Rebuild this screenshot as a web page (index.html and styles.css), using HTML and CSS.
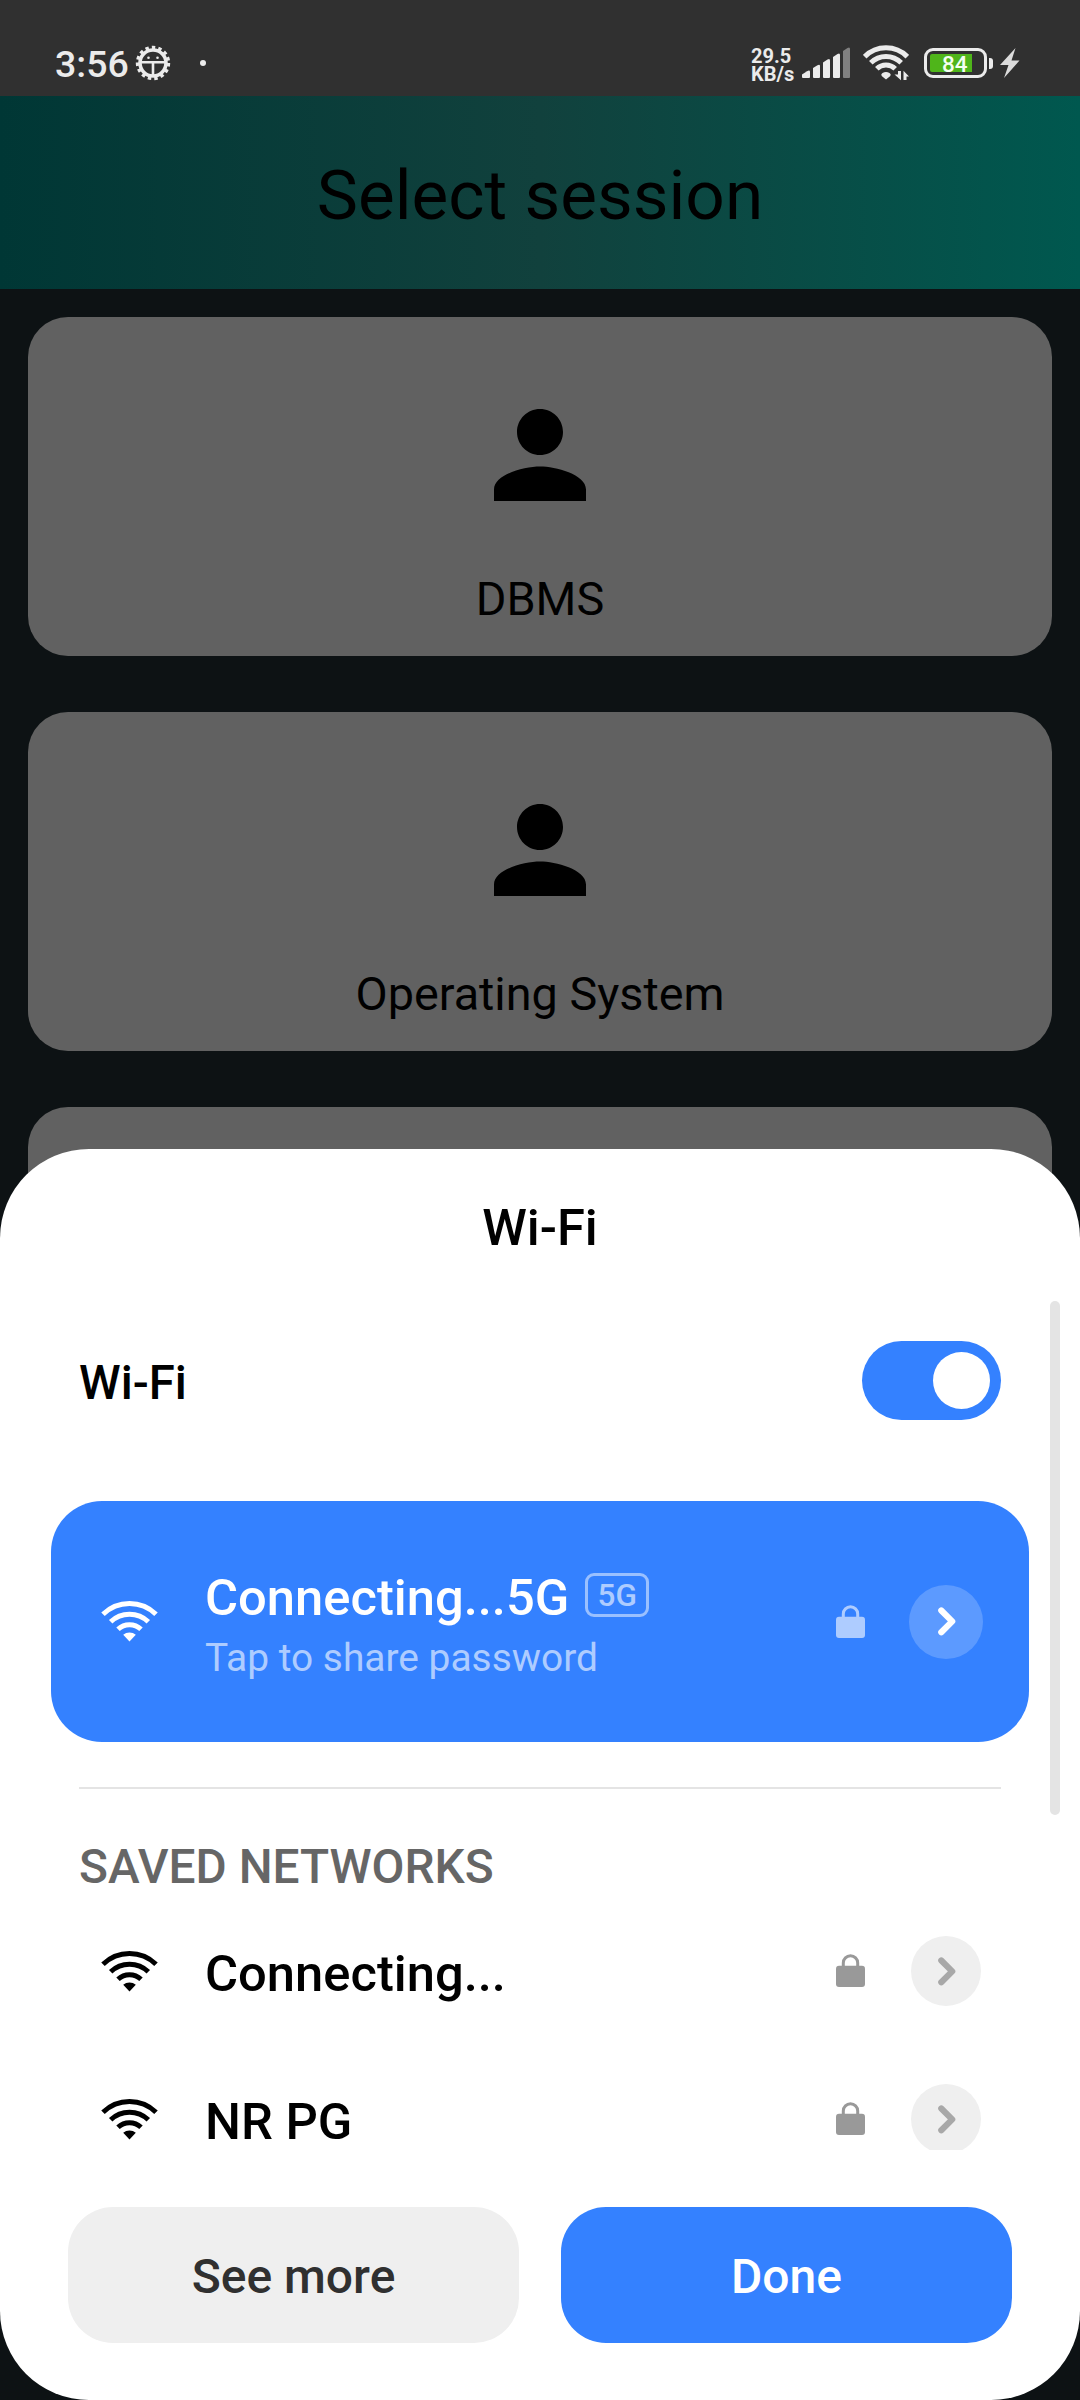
FILE: index.html
```html
<!DOCTYPE html>
<html lang="en">
<head>
<meta charset="utf-8">
<title>Select session</title>
<link rel="stylesheet" href="styles.css">
</head>
<body>
<svg class="symbols" width="0" height="0" aria-hidden="true">
  <symbol id="wifi" viewBox="0 0 57 41">
    <g fill="none" stroke="currentColor" stroke-width="5">
      <path d="M2 13.3A38 38 0 0 1 55 13.3"/>
      <path d="M9.7 20.7A27.3 27.3 0 0 1 47.3 20.7"/>
      <path d="M17 28.3A16.8 16.8 0 0 1 40 28.3"/>
    </g>
    <path fill="currentColor" d="M28.5 40.5L22.2 33.8A9.8 9.8 0 0 1 34.8 33.8Z"/>
  </symbol>
  <symbol id="lock" viewBox="0 0 29 33">
    <path fill="none" stroke="currentColor" stroke-width="3" d="M7.3 13V9A7.2 7.2 0 0 1 21.7 9V13"/>
    <rect fill="currentColor" y="11.7" width="29" height="21.3" rx="3"/>
  </symbol>
  <symbol id="chevron" viewBox="0 0 18 29">
    <path fill="none" stroke="currentColor" stroke-width="6.2" stroke-linecap="round" stroke-linejoin="round" d="M3.3 3.5L14.2 14.4L3.3 25.3"/>
  </symbol>
  <symbol id="person" viewBox="0 0 24 24">
    <path d="M12 12c2.21 0 4-1.79 4-4s-1.79-4-4-4-4 1.79-4 4 1.79 4 4 4zm0 2c-2.67 0-8 1.34-8 4v2h16v-2c0-2.66-5.33-4-8-4z"/>
  </symbol>
</svg>
<div class="screen">
  <header class="status">
    <span class="time">3:56</span>
    <svg class="bug" width="36" height="36" viewBox="0 0 36 36">
      <circle cx="18" cy="18" r="15.4" fill="none" stroke="#ebebeb" stroke-width="3.6" stroke-dasharray="3.4 3.05"/>
      <circle cx="18" cy="18" r="13" fill="none" stroke="#ebebeb" stroke-width="3.6"/>
      <path d="M5 17.2H31M18 18V31" stroke="#ebebeb" stroke-width="2.6"/>
      <circle cx="13.5" cy="12.8" r="1.3" fill="#ebebeb"/><circle cx="22.5" cy="12.8" r="1.3" fill="#ebebeb"/>
    </svg>
    <i class="dot"></i>
    <div class="indicators">
      <div class="speed"><span>29.5</span><span>KB/s</span></div>
      <svg class="signal" width="48" height="32" viewBox="0 0 48 32" fill="#ebebeb">
        <path d="M0 30V27.5L5 24.2Q8 22.500 8 25V30Q8 31 7 31H1Q0 31 0 30Z"/>
        <path d="M11 30V21L15.500 18.200Q18 17 18 19V30Q18 31 17 31H12Q11 31 11 30Z"/>
        <path d="M21 30V15.500L25.500 12.500Q28 11 28 13.500V30Q28 31 27 31H22Q21 31 21 30Z"/>
        <path d="M31 30V10L35.500 7Q38 5.500 38 8V30Q38 31 37 31H32Q31 31 31 30Z"/>
        <path fill="#808080" d="M41 30V4L45.500 1Q48 -.5 48 2V30Q48 31 47 31H42Q41 31 41 30Z"/>
      </svg>
      <svg class="status-wifi" width="46" height="36" viewBox="0 0 46 36">
        <g fill="none" stroke="#ebebeb" stroke-width="5">
          <path d="M1.700 11.700A30 30 0 0 1 44.300 11.700"/>
          <path d="M7.800 17.800A21.500 21.500 0 0 1 38.200 17.800"/>
          <path d="M13.800 23.800A13 13 0 0 1 32.200 23.800"/>
        </g>
        <path fill="#ebebeb" d="M23 34.500L18.700 31Q17.500 29 19.500 28Q23 26 26.500 28Q28.500 29 27.300 31Z"/>
        <path fill="#ebebeb" d="M35 26H38V35.200L31.500 29.500H35ZM40.500 35V25.800L46 31.500H43.500V35Z"/>
      </svg>
      <div class="battery"><div class="charge">84</div></div>
      <svg class="bolt" width="20" height="30" viewBox="0 0 20 30"><path fill="#dcdcdc" d="M15.500 0L0 17H8.500L4 30L19.500 12.500H11.500Z"/></svg>
    </div>
  </header>
  <div class="appbar">Select session</div>
  <main class="sessions">
    <div class="session"><svg class="person"><use href="#person"/></svg><span>DBMS</span></div>
    <div class="session"><svg class="person"><use href="#person"/></svg><span>Operating System</span></div>
    <div class="session"></div>
  </main>
  <section class="sheet">
    <h1 class="sheet-title">Wi-Fi</h1>
    <div class="scroll">
      <div class="toggle-row"><span>Wi-Fi</span><div class="toggle"><i class="knob"></i></div></div>
      <div class="network connected">
        <svg class="wifi"><use href="#wifi"/></svg>
        <div class="details">
          <div class="name">Connecting...5G <span class="badge">5G</span></div>
          <div class="hint">Tap to share password</div>
        </div>
        <svg class="lock"><use href="#lock"/></svg>
        <div class="more"><svg class="chevron"><use href="#chevron"/></svg></div>
      </div>
      <hr class="divider">
      <h2 class="group">SAVED NETWORKS</h2>
      <div class="network">
        <svg class="wifi"><use href="#wifi"/></svg>
        <div class="details"><div class="name">Connecting...</div></div>
        <svg class="lock"><use href="#lock"/></svg>
        <div class="more"><svg class="chevron"><use href="#chevron"/></svg></div>
      </div>
      <div class="network">
        <svg class="wifi"><use href="#wifi"/></svg>
        <div class="details"><div class="name">NR PG</div></div>
        <svg class="lock"><use href="#lock"/></svg>
        <div class="more"><svg class="chevron"><use href="#chevron"/></svg></div>
      </div>
      <i class="scrollbar"></i>
    </div>
    <footer class="actions">
      <button class="button">See more</button>
      <button class="button primary">Done</button>
    </footer>
  </section>
</div>
</body>
</html>
```
FILE: styles.css
```css
* { box-sizing: border-box; }
body { margin: 0; font-family: Roboto, sans-serif; }
svg { display: block; flex: none; }
.symbols { position: absolute; }
.screen { position: relative; width: 1080px; height: 2400px; overflow: hidden; background: #0d1214; }

.status { display: flex; align-items: center; height: 96px; padding: 29px 60px 0 55px; background: #303030; color: #ebebeb; }
.time { width: 80px; padding-top: 3px; font-size: 37.5px; font-weight: 500; line-height: 44px; }
.dot { width: 6px; height: 6px; margin-left: 29px; border-radius: 50%; background: #ebebeb; }
.indicators { display: flex; align-items: center; margin-left: auto; }
.speed { display: flex; flex-direction: column; width: 51px; margin-top: 5px; font-size: 20px; font-weight: 700; line-height: 18px; }
.signal { margin-right: 13px; }
.status-wifi { margin-right: 15px; }
.battery { position: relative; width: 63px; height: 30px; padding: 3px; border: 3px solid #ebebeb; border-radius: 9px; }
.battery::after { content: ""; position: absolute; left: 62px; top: 7px; width: 4px; height: 11px; border-radius: 0 3px 3px 0; background: #ebebeb; }
.charge { width: 42px; height: 18px; padding-left: 12px; border-radius: 2px 0 0 2px; background: #4fb51a; color: #f4fff0; font-size: 22.5px; font-weight: 500; line-height: 20px; }
.bolt { margin-left: 13px; }

.appbar { height: 193px; padding-top: 6px; background: linear-gradient(90deg, #003735, #11413d 50%, #00584f); font-size: 69.3px; line-height: 187px; text-align: center; }
.sessions { display: flex; flex-direction: column; gap: 56px; padding: 28px; }
.session { display: flex; flex-direction: column; align-items: center; height: 339px; padding-top: 69px; border-radius: 40px; background: #616161; font-size: 46.75px; line-height: 56px; }
.person { width: 138px; height: 138px; margin-bottom: 47px; }

.sheet { position: absolute; left: 0; right: 0; bottom: 0; height: 1251px; border-radius: 89px; background: #fff; display: flex; flex-direction: column; }
.sheet-title { margin: 0; height: 152px; padding-top: 6px; font-size: 50.7px; font-weight: 500; line-height: 146px; text-align: center; }
.scroll { position: relative; height: 849px; overflow: hidden; }
.scrollbar { position: absolute; right: 20px; top: 0; width: 10px; height: 514px; border-radius: 5px; background: #e4e4e4; }
.toggle-row { display: flex; align-items: center; justify-content: space-between; height: 159px; padding: 0 79px; font-size: 47.3px; font-weight: 500; }
.toggle-row span { padding-top: 4px; }
.toggle { width: 139px; height: 79px; padding: 11px; border-radius: 40px; background: #3481ff; display: flex; justify-content: flex-end; }
.knob { width: 57px; height: 57px; border-radius: 50%; background: #fff; }
.network { display: flex; align-items: center; height: 148px; margin: 0 51px; padding: 0 48px 0 50px; }
.wifi { width: 57px; height: 41px; }
.details { flex: 1; padding: 6px 0 0 47px; }
.name { display: flex; align-items: center; font-size: 50.7px; font-weight: 500; line-height: 60px; }
.lock { width: 29px; height: 33px; margin-bottom: 1px; color: #999; }
.more { display: grid; place-items: center; width: 70px; height: 70px; margin-left: 46px; padding-left: 2px; border-radius: 50%; background: #efefef; color: #a8a8a8; }
.chevron { width: 18px; height: 29px; }
.connected { height: 241px; margin-top: 41px; padding-right: 46px; border-radius: 51px; background: #3481ff; color: #fff; }
.connected .lock { color: #aeccff; }
.connected .more { width: 74px; height: 74px; margin-left: 44px; background: #5c9aff; color: #fff; }
.badge { width: 64px; height: 44px; margin: -6px 0 0 16px; border: 3px solid #9ac0ff; border-radius: 9px; color: #aeccff; font-size: 31.5px; font-weight: 500; line-height: 40px; text-align: center; }
.hint { margin-top: 6px; color: #aeccff; font-size: 38.9px; line-height: 47px; }
.divider { height: 2px; margin: 45px 79px 0; border: 0; background: #e4e4e4; }
.group { margin: 0; padding: 48px 0 0 79px; color: #666; font-size: 47.8px; font-weight: 500; line-height: 60px; }
.actions { display: grid; grid-template-columns: 1fr 1fr; gap: 42px; padding: 57px 68px; }
.button { height: 136px; padding: 3px 0 0; border: 0; border-radius: 45px; background: #efefef; color: #303030; font: 500 48px Roboto, sans-serif; }
.primary { background: #3481ff; color: #fff; }
```
